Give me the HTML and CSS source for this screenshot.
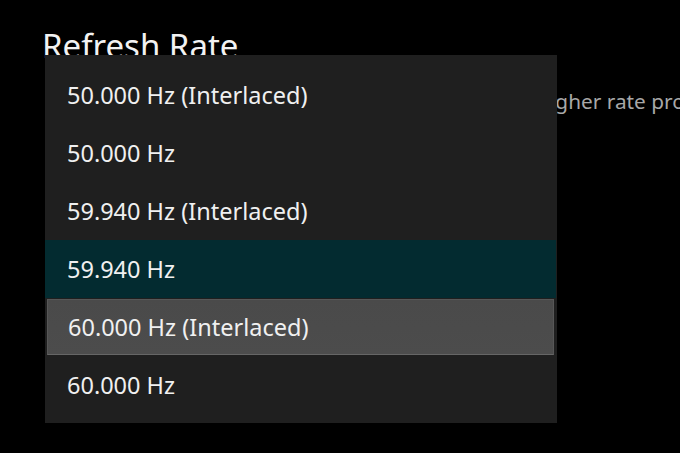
FILE: index.html
```html
<!DOCTYPE html>
<html>
<head>
<meta charset="utf-8">
<link rel="stylesheet" href="styles.css">
</head>
<body>
<div class="page">
  <h1 class="title">Refresh Rate</h1>
  <p class="desc">Choose the best refresh rate for your TV screen. A higher rate provides smoother motion.</p>
  <ul class="menu">
    <li class="item">50.000 Hz (Interlaced)</li>
    <li class="item">50.000 Hz</li>
    <li class="item">59.940 Hz (Interlaced)</li>
    <li class="item selected">59.940 Hz</li>
    <li class="item focused">60.000 Hz (Interlaced)</li>
    <li class="item">60.000 Hz</li>
  </ul>
</div>
</body>
</html>
```
FILE: styles.css
```css
html, body {
  margin: 0;
  padding: 0;
  background: #000;
  width: 680px;
  height: 453px;
  overflow: hidden;
}
.page {
  position: relative;
  width: 680px;
  height: 453px;
  padding: 24px 0 0 42px;
  box-sizing: border-box;
  font-family: "Noto Sans", "Open Sans", sans-serif;
  white-space: nowrap;
  overflow: hidden;
}
.title {
  margin: 0;
  font-weight: 400;
  font-size: 33px;
  line-height: 44px;
  color: #f2f2f2;
}
.desc {
  margin: 18px 0 0 5px;
  font-size: 20.8px;
  line-height: 30px;
  color: #a8a8a8;
}
.menu {
  position: absolute;
  left: 45px;
  top: 55px;
  width: 512px;
  height: 368px;
  box-sizing: border-box;
  margin: 0;
  padding: 11px 0 0 0;
  list-style: none;
  background: #1f1f1f;
}
.item {
  height: 58px;
  display: flex;
  align-items: center;
  padding-left: 22px;
  font-size: 23.5px;
  color: #f0f0f0;
  box-sizing: border-box;
}
.selected {
  background: #032b30;
  margin-right: 1px;
}
.focused {
  background: linear-gradient(#4a4a4a, #4c4c4c);
  border: 1px solid #575757;
  border-bottom-color: #666;
  margin: 1px 3px 1px 2px;
  height: 56px;
  padding-left: 20px;
}
```
